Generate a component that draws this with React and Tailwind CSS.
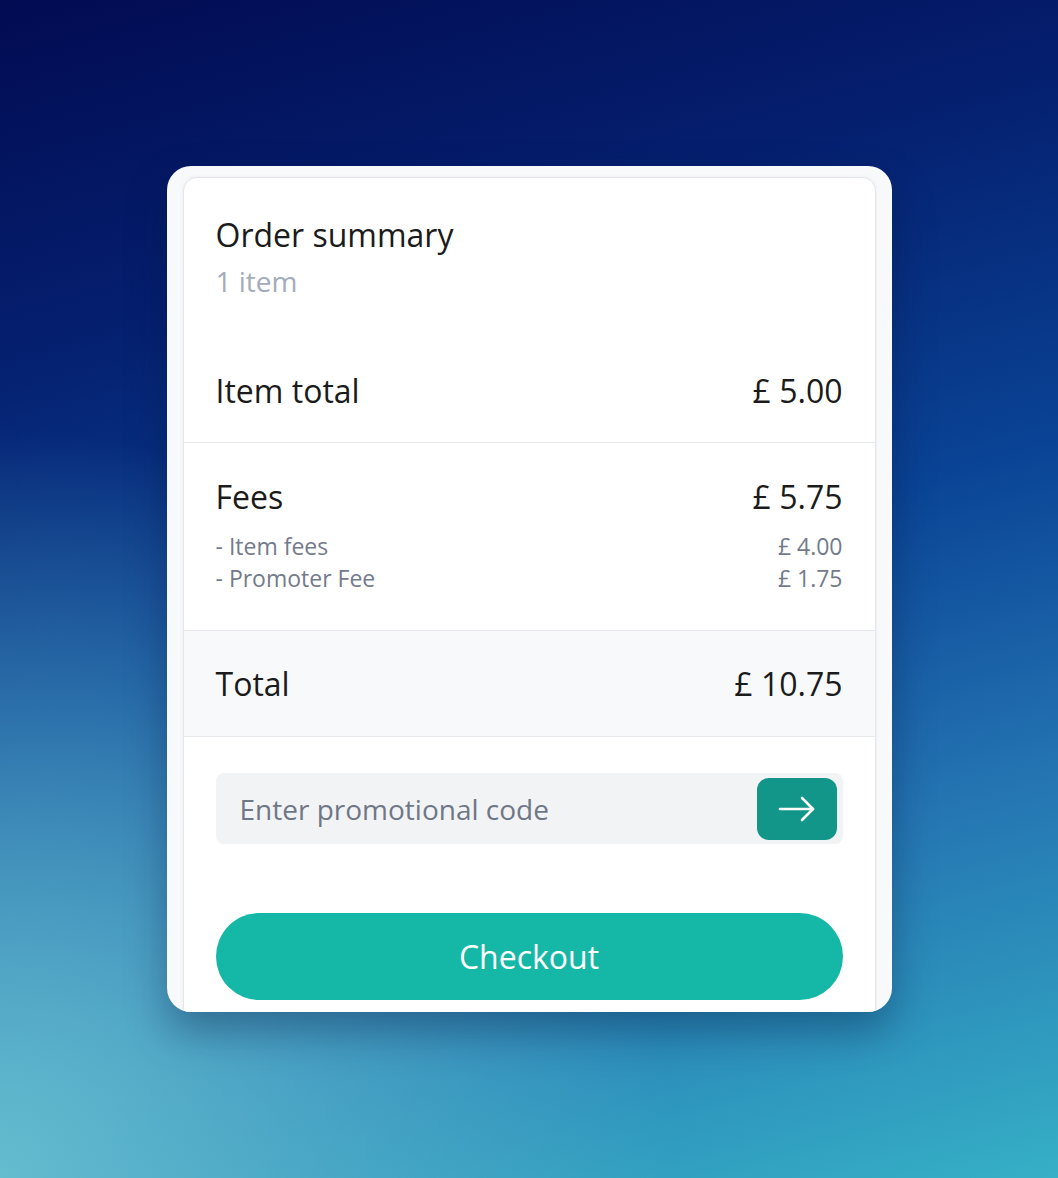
import React from 'react';

const font = { fontFamily: '"Open Sans", "Noto Sans", sans-serif' };

const ArrowIcon = () => (
  <svg width="42" height="30" viewBox="0 0 42 30" fill="none" stroke="white" strokeWidth="2.6" strokeLinecap="round" strokeLinejoin="round">
    <path d="M4 15h33" />
    <path d="M26 4l11 11-11 11" />
  </svg>
);

export default function App() {
  return (
    <div
      className="w-full min-h-[1178px] flex justify-center pt-[166px] bg-[radial-gradient(ellipse_at_0%_100%,#64bccf_0%,rgba(100,188,207,0)_45%),linear-gradient(165deg,#020b52_0%,#052070_25%,#0a4496_50%,#2474b2_72%,#36b0c6_100%)]"
      style={font}
    >
      <div className="w-[725px] h-[846px] rounded-[24px] bg-[#f8f9fb] px-[16px] pt-[11px] overflow-hidden shadow-[0_20px_40px_rgba(0,20,60,0.35)]">
        <div className="bg-white border border-[#e4e6eb] rounded-t-[14px] shadow-[0_0_4px_rgba(0,0,0,0.06)] h-[900px]">
          {/* Header */}
          <div className="h-[162px] px-[32px] pt-[36px]">
            <h1 className="text-[32px] leading-[42px] text-[#1b1b1b]">Order summary</h1>
            <p className="text-[28px] leading-[38px] text-[#a3acba] mt-[6px]">1 item</p>
          </div>

          {/* Item total */}
          <div className="h-[103px] px-[32px] flex items-center justify-between border-b border-[#e6e8ec] text-[32px] text-[#1b1b1b]">
            <span>Item total</span>
            <span>£ 5.00</span>
          </div>

          {/* Fees */}
          <div className="px-[32px] pt-[33px] pb-[36px] border-b border-[#e6e8ec]">
            <div className="flex justify-between text-[32px] leading-[42px] text-[#1b1b1b]">
              <span>Fees</span>
              <span>£ 5.75</span>
            </div>
            <div className="mt-[12px] text-[23px] leading-[32px] text-[#737b8b]">
              <div className="flex justify-between">
                <span>- Item fees</span>
                <span>£ 4.00</span>
              </div>
              <div className="flex justify-between">
                <span>- Promoter Fee</span>
                <span>£ 1.75</span>
              </div>
            </div>
          </div>

          {/* Total */}
          <div className="h-[106px] px-[32px] flex items-center justify-between bg-[#f8f9fb] border-b border-[#e6e8ec] text-[32px] text-[#1b1b1b]">
            <span>Total</span>
            <span>£ 10.75</span>
          </div>

          {/* Promo + checkout */}
          <div className="px-[32px] pt-[36px]">
            <div className="h-[71px] rounded-[8px] bg-[#f2f3f5] flex items-center pl-[24px] pr-[6px]">
              <span className="flex-1 text-[28px] text-[#6f7787]">Enter promotional code</span>
              <button className="w-[80px] h-[62px] rounded-[12px] bg-[#12968a] flex items-center justify-center">
                <ArrowIcon />
              </button>
            </div>
            <button className="mt-[69px] w-full h-[87px] rounded-full bg-[#15b8a6] text-white text-[32px]">
              Checkout
            </button>
          </div>
        </div>
      </div>
    </div>
  );
}
